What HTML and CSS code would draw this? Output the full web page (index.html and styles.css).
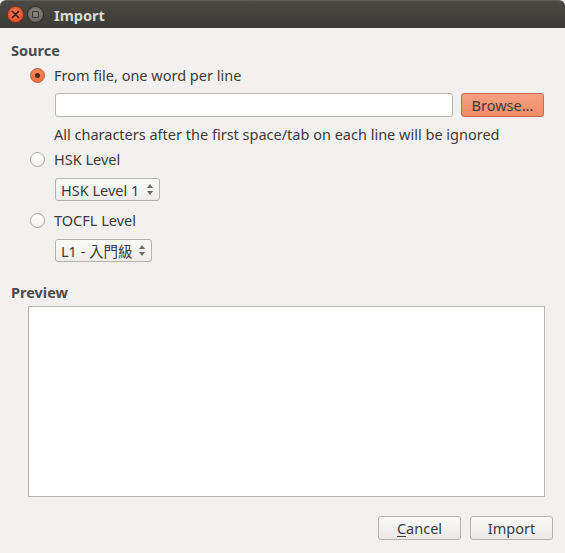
FILE: index.html
```html
<!DOCTYPE html>
<html>
<head>
<meta charset="utf-8">
<link rel="stylesheet" href="styles.css">
</head>
<body>
<div class="window">
  <div class="titlebar">
    <span class="wbtn close"><svg width="9" height="9" viewBox="0 0 9 9"><path d="M1.5 1.5L7.5 7.5M7.5 1.5L1.5 7.5" stroke="#3a1a10" stroke-width="1.6" stroke-linecap="round"/></svg></span>
    <span class="wbtn max"><span class="sq"></span></span>
    <span class="title">Import</span>
  </div>
  <div class="content">
    <div class="heading">Source</div>
    <label class="radio-row r1"><span class="radio on"></span><span>From file, one word per line</span></label>
    <div class="file-row">
      <div class="entry"></div>
      <button class="btn suggested">Browse...</button>
    </div>
    <div class="hint">All characters after the first space/tab on each line will be ignored</div>
    <label class="radio-row r2"><span class="radio"></span><span>HSK Level</span></label>
    <div class="combo c1"><span>HSK Level 1</span><span class="arrows"></span></div>
    <label class="radio-row r3"><span class="radio"></span><span>TOCFL Level</span></label>
    <div class="combo c2"><span>L1 - 入門級</span><span class="arrows"></span></div>
    <div class="heading preview-h">Preview</div>
    <div class="preview"></div>
    <div class="actions">
      <button class="btn"><span class="u">C</span>ancel</button>
      <button class="btn">Import</button>
    </div>
  </div>
</div>
</body>
</html>
```
FILE: styles.css
```css
html, body { margin: 0; padding: 0; }
body {
  width: 565px; height: 553px; overflow: hidden;
  background: #f2f1f0;
  font-family: "Noto Sans", "Noto Sans CJK TC", sans-serif;
  font-size: 14.5px;
  color: #3c3c3c;
}
.window { width: 565px; height: 553px; display: flex; flex-direction: column; }
.titlebar {
  height: 28px; flex: none;
  background: linear-gradient(#4a4944, #3c3b37);
  border-top: 1px solid #5c5b56;
  box-sizing: border-box;
  border-radius: 6px 6px 0 0;
  display: flex; align-items: center;
  padding-left: 7px;
}
.wbtn {
  width: 17px; height: 17px; border-radius: 50%;
  display: flex; align-items: center; justify-content: center;
  box-sizing: border-box; margin-right: 3px;
}
.close {
  background: radial-gradient(circle at 50% 40%, #f47a55, #e0461c);
  border: 1px solid #8a2e14;
}
.max {
  background: radial-gradient(circle at 50% 40%, #8a8984, #5e5d58);
  border: 1px solid #2f2e2b;
}
.sq { width: 7px; height: 7px; border: 1.5px solid #3a3935; border-radius: 1px; box-sizing: border-box; }
.title {
  margin-left: 7px; color: #dfdbd2; font-weight: bold; font-size: 14.5px;
}
.content { display: flex; flex-direction: column; padding: 13px 12px 0 11px; flex: 1; }
.heading { font-weight: bold; line-height: 18px; height: 18px; color: #4c4c4c; }
.radio-row { display: flex; align-items: center; height: 20px; margin-left: 19px; gap: 9px; }
.r1 { margin-top: 6px; }
.r2 { margin-top: 6px; }
.r3 { margin-top: 9px; }
.radio {
  width: 15px; height: 15px; box-sizing: border-box; border-radius: 50%;
  border: 1px solid #a9a8a4;
  background: linear-gradient(#ffffff, #f2f1ef);
  position: relative;
}
.radio.on {
  border-color: #c4582f;
  background: linear-gradient(#f6875c, #ec6d3f);
}
.radio.on::after {
  content: ""; position: absolute; left: 4px; top: 4px; width: 5px; height: 5px;
  border-radius: 50%; background: #4e2a1c;
}
.file-row { display: flex; margin-top: 8px; margin-left: 44px; gap: 8px; height: 24px; }
.entry {
  flex: none; width: 398px; height: 24px; box-sizing: border-box;
  background: #fff; border: 1px solid #b5b3ae; border-radius: 3px;
}
.btn {
  font-family: inherit; font-size: 14.5px; color: #3c3c3c;
  height: 24px; box-sizing: border-box; padding: 0;
  border: 1px solid #b4b2ad; border-radius: 3px;
  background: linear-gradient(#fbfbfa, #eae9e7);
  display: flex; align-items: center; justify-content: center;
}
.btn.suggested {
  width: 83px; border-color: #c8694b;
  background: linear-gradient(#f7a182, #ef8c66);
}
.hint { margin-top: 8px; margin-left: 43px; line-height: 18px; height: 18px; }
.combo {
  margin-top: 9px; margin-left: 44px; height: 23px; box-sizing: border-box;
  border: 1px solid #b4b2ad; border-radius: 3px;
  background: linear-gradient(#fbfbfa, #eeedeb);
  display: flex; align-items: center; padding-left: 5px; padding-right: 5px;
  align-self: flex-start;
}
.c1 { width: 105px; }
.c2 { width: 97px; }
.combo .arrows { margin-left: auto; width: 7px; height: 11px; position: relative; flex: none; }
.combo .arrows::before, .combo .arrows::after {
  content: ""; position: absolute; left: 0; width: 0; height: 0;
  border-left: 3.5px solid transparent; border-right: 3.5px solid transparent;
}
.combo .arrows::before { top: 0; border-bottom: 4px solid #6a6a6a; }
.combo .arrows::after { bottom: 0; border-top: 4px solid #6a6a6a; }
.preview-h { margin-top: 21px; }
.preview {
  margin-top: 5px; margin-left: 17px; width: 517px; height: 191px; box-sizing: border-box;
  background: #fff; border: 1px solid #b8b6b1;
}
.actions { display: flex; justify-content: flex-end; gap: 9px; margin-top: 19px; }
.actions .btn { width: 83px; }
.u { text-decoration: underline; text-underline-offset: 2px; }
```
